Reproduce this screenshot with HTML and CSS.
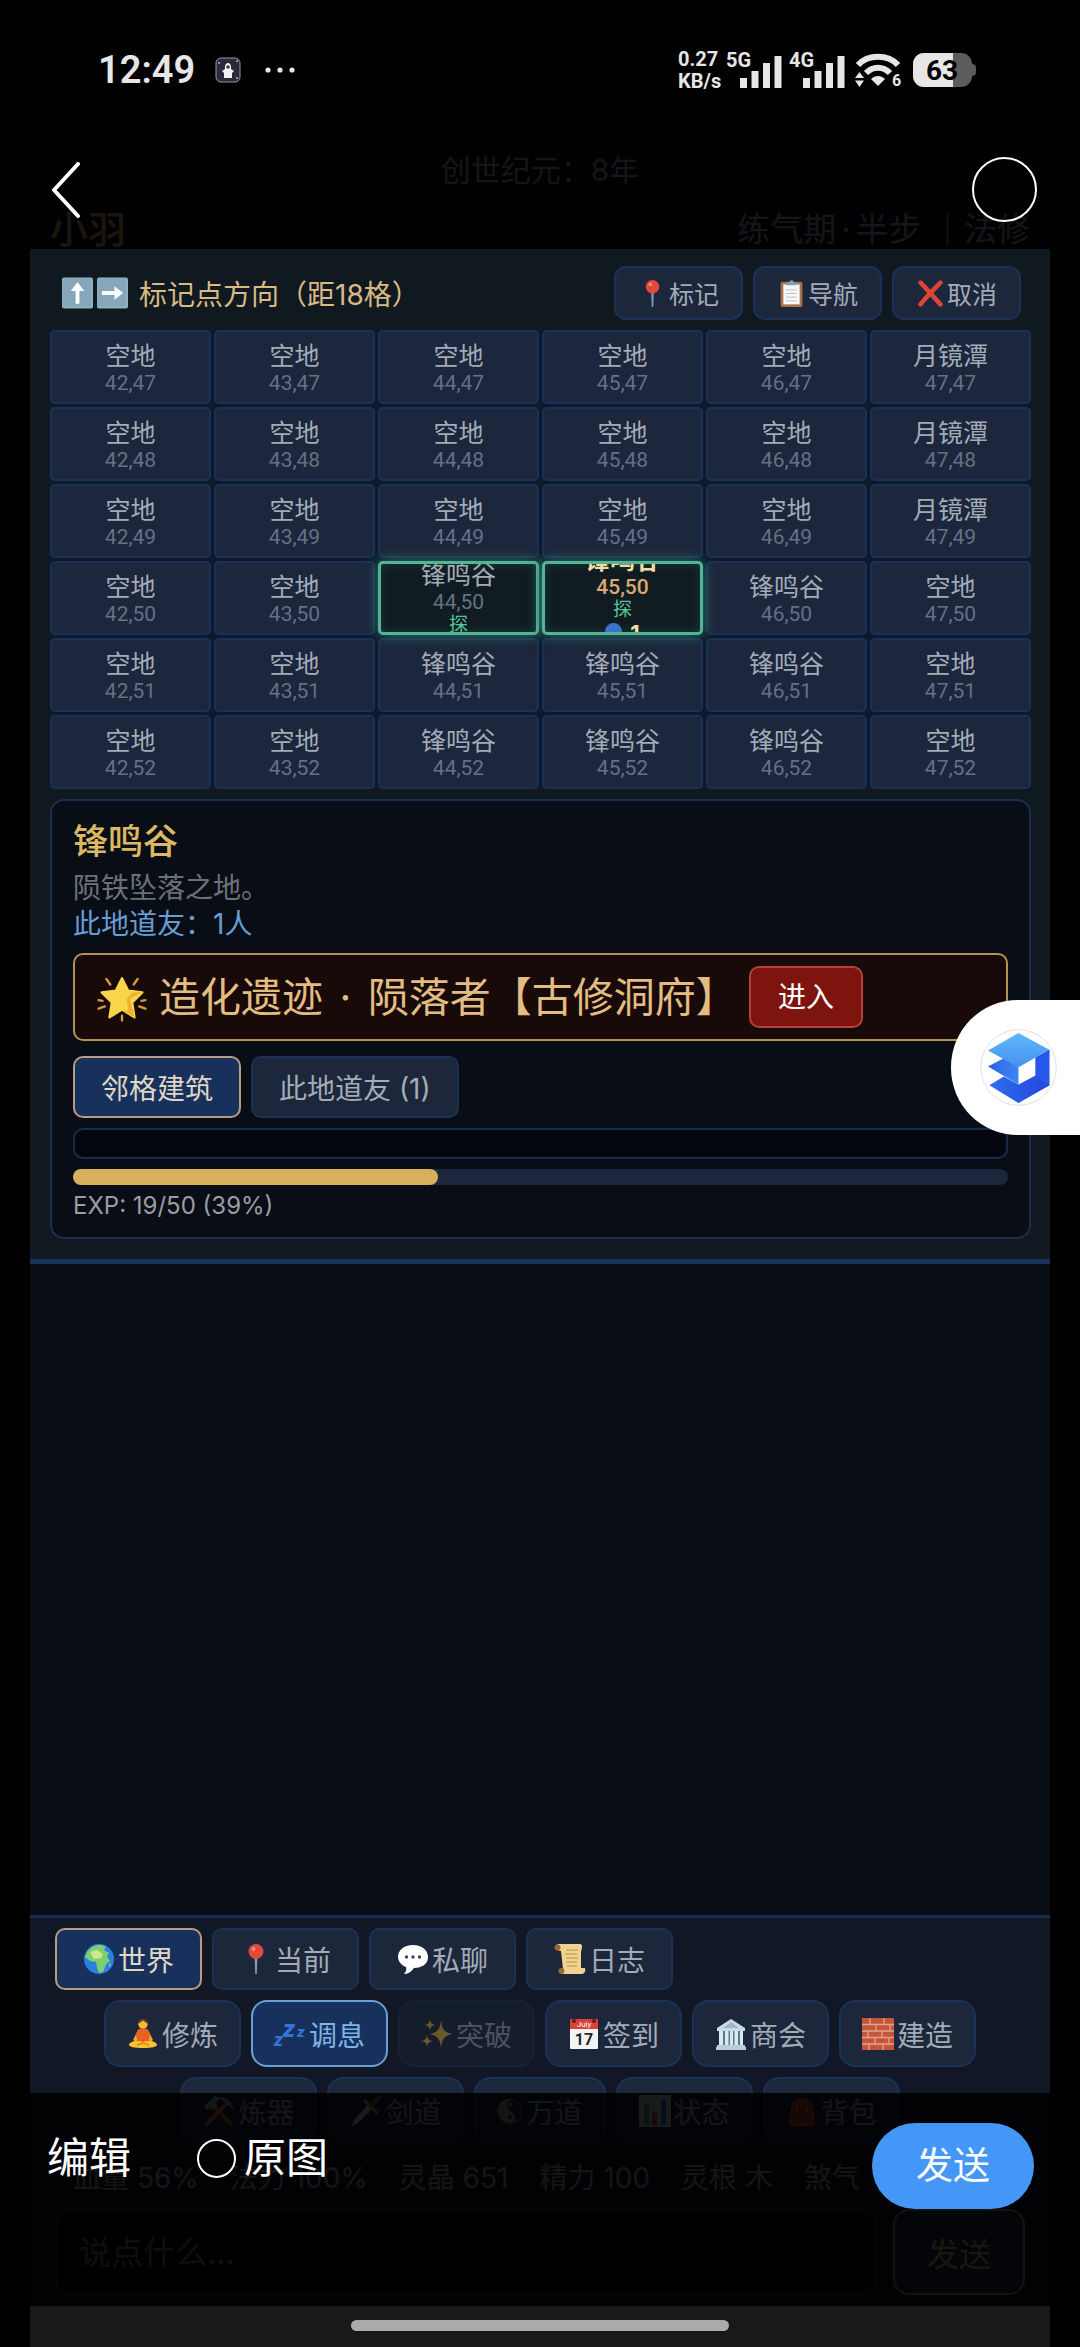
FILE: index.html
```html
<!DOCTYPE html>
<html lang="zh-CN">
<head>
<meta charset="utf-8">
<meta name="viewport" content="width=device-width, initial-scale=1">
<title>创世纪元</title>
<link rel="stylesheet" href="styles.css">
</head>
<body>
<svg class="sprite" aria-hidden="true">
  <defs>
    <linearGradient id="g-top" x1="0" y1="0" x2="0" y2="1"><stop offset="0" stop-color="#5fb8fa"/><stop offset="1" stop-color="#4591ee"/></linearGradient>
    <linearGradient id="g-mid" x1="0" y1="0" x2="1" y2="0"><stop offset="0" stop-color="#2a62ea"/><stop offset="1" stop-color="#3f87f2"/></linearGradient>
    <linearGradient id="g-low" x1="0" y1="0" x2="1" y2="0"><stop offset="0" stop-color="#2b6df0"/><stop offset="1" stop-color="#2546d8"/></linearGradient>
  </defs>
  <symbol id="i-up" viewBox="0 0 32 32"><rect width="32" height="32" rx="2" fill="#8fb0c2"/><rect x="1" y="1" width="29" height="29" rx="2" fill="#86a7ba"/><path d="M16 5l7 9h-5v13h-4V14H9z" fill="#fff"/></symbol>
  <symbol id="i-right" viewBox="0 0 32 32"><rect width="32" height="32" rx="2" fill="#8fb0c2"/><rect x="1" y="1" width="29" height="29" rx="2" fill="#86a7ba"/><path d="M27 16l-9 7v-5H5v-4h13V9z" fill="#fff"/></symbol>
  <symbol id="i-pin" viewBox="0 0 32 32"><path d="M14.600 14h2.800l-.6 17h-1.600z" fill="#7da0b5"/><circle cx="16" cy="8.500" r="7.500" fill="#e2483d"/><circle cx="13.500" cy="6" r="2" fill="#f58a78"/></symbol>
  <symbol id="i-clip" viewBox="0 0 32 32"><rect x="4" y="3" width="24" height="28" rx="2" fill="#a9714b"/><rect x="7" y="6" width="18" height="22" fill="#f5f7f8"/><path d="M10 12h12M10 16h12M10 20h12M10 24h12" stroke="#b5c0c6" stroke-width="1"/><path d="M10 7V4h3.500a2.500 2.500 0 015 0H22v3z" fill="#7ba5bd"/></symbol>
  <symbol id="i-cross" viewBox="0 0 32 32"><path d="M5 4c7 7 13 14 22 24M27 4C18 13 11 20 5 28" stroke="#dd4538" stroke-width="5" stroke-linecap="round" fill="none"/></symbol>
  <symbol id="i-star" viewBox="0 0 32 32"><path d="M16 4l4 8 9 1-6.500 6.500L24 29l-8-5-8 5 1.500-9.500L3 13l9-1z" fill="#f9d649" stroke="#f9d649" stroke-width="1.500" stroke-linejoin="round"/><path d="M29 13l-8 4 3 12-8-5 4 1-1-8 4-4z" fill="#eeb233"/><path d="M6 4.500L8.500 8M26 4.500L23.500 8M1 23.500l4-1.500M31 23.500L27 22M1 18l2.500.5M31 18l-2.500.5M16 28v3" stroke="#d99a35" stroke-width="1.500" stroke-linecap="round"/></symbol>
  <symbol id="i-globe" viewBox="0 0 32 32"><circle cx="16" cy="16" r="15" fill="#2b7fe0"/><path d="M4 9c5-7 13-9 19-5l-2 3 5 3-2 3 3 5-4 3-3 8-4 1-2-5-1-6-6-1-5-4z" fill="#7fcf72"/><path d="M7 9l7-2 6 4-2 4-7 1z" fill="#cfe98a"/><path d="M26 20l2 1-2 4z" fill="#7fcf72"/></symbol>
  <symbol id="i-chat" viewBox="0 0 32 32"><path d="M16 2c9 0 15 5 15 12S25 25 17 25c-3 4-6 6-10 6 2-2 3-5 2-7C4 22 1 18 1 14 1 7 7 2 16 2z" fill="#fff"/><circle cx="9.500" cy="14" r="1.700" fill="#3c4650"/><circle cx="16" cy="14" r="1.700" fill="#3c4650"/><circle cx="22.500" cy="14" r="1.700" fill="#3c4650"/></symbol>
  <symbol id="i-scroll" viewBox="0 0 32 32"><path d="M4 1h22c3 0 2 5 1 8v16h4c1 4-1 6-4 6H9c-3 0-4-3-2-5h2L7 8C2 8 0 3 4 1z" fill="#f0d391"/><path d="M12 7h12M11 11h12M12 15h12M12 19h11M13 23h10" stroke="#cfa55d" stroke-width="1.300"/><circle cx="3.500" cy="4.500" r="3" fill="#9b673e"/><circle cx="7.500" cy="28" r="3" fill="#9b673e"/></symbol>
  <symbol id="i-lotus" viewBox="0 0 32 32"><circle cx="16" cy="6" r="4.800" fill="#f8bd2e"/><path d="M10.800 6a5.200 5.200 0 0110.400 0L16 2.500z" fill="#5d3b22"/><path d="M11 12c2-2 8-2 10 0l5 10-3 2-3-5v6h-8v-6l-3 5-3-2z" fill="#f8a52b"/><path d="M11 12c2-2 8-2 10 0l2 5-2 8H11l-2-8z" fill="#e9611e"/><path d="M2 26c4-4 9-4 14-2 5-2 10-2 14 2 1 3-6 4-14 4S1 29 2 26z" fill="#f9c02f"/><path d="M10 27l6-2 6 2" stroke="#d98c1c" stroke-width="1.500" fill="none"/></symbol>
  <symbol id="i-spark" viewBox="0 0 32 32"><path d="M20 2c1 9 3 12 11 14-8 2-10 5-11 14-1-9-3-12-11-14 8-2 10-5 11-14zM9 1c.5 4 1.500 5 5 6-3.500 1-4.500 2-5 6-.5-4-1.500-5-5-6 3.500-1 4.500-2 5-6zM6 17c.6 4 2 5.500 6 6-4 .6-5.400 2-6 6-.6-4-2-5.400-6-6 4-.5 5.400-2 6-6z" fill="#f0b92f"/></symbol>
  <symbol id="i-museum" viewBox="0 0 32 32"><path d="M16 1l14 9v3H2v-3z" fill="#c9dce6"/><path d="M16 4l8 6H8z" fill="#9fb8c6"/><path d="M4 13h24v14H4z" fill="#5f7887"/><path d="M4 13h4v14H4zM10 13h3.500v14H10zM15 13h3v14h-3zM19.500 13h3.500v14h-3.500zM25 13h3v14h-3z" fill="#d9e8ef"/><path d="M2 27h28v2h1v3H1v-3h1z" fill="#b8cfdb"/></symbol>
  <symbol id="i-brick" viewBox="0 0 32 32"><rect width="32" height="32" fill="#c4573b"/><path d="M0 6.500h32M0 13h32M0 19.500h32M0 26h32M8 0v6.500M22 0v6.500M14 6.500V13M28 6.500V13M6 13v6.500M20 13v6.500M13 19.500V26M27 19.500V26M7 26v6M21 26v6" stroke="#e3a38b" stroke-width="1.300"/></symbol>
  <symbol id="i-tools" viewBox="0 0 32 32"><path d="M9 9l19 20" stroke="#a9672f" stroke-width="4" stroke-linecap="round"/><path d="M24 8L4 29" stroke="#c97a35" stroke-width="4" stroke-linecap="round"/><path d="M1 11L12 1l6 2-5 5 1 4-4 3-4-2-2 2z" fill="#a5b8c2"/><path d="M15 2c8-1 14 5 16 13l-9-8z" fill="#a5b8c2"/></symbol>
  <symbol id="i-dagger" viewBox="0 0 32 32"><path d="M2 31l2-6L19 9l4 4L8 28z" fill="#c2d0d8"/><path d="M15 6l12 12" stroke="#c89032" stroke-width="3.500" stroke-linecap="round"/><path d="M22 10l7-7" stroke="#8b5a34" stroke-width="4" stroke-linecap="round"/></symbol>
  <symbol id="i-yin" viewBox="0 0 32 32"><circle cx="16" cy="16" r="15" fill="#25282b" stroke="#a2a7aa" stroke-width="1"/><path d="M16 1a15 15 0 000 30c4 0 7-4 6-8s-4-6-6-7-4-4-3-8 3-7 3-7z" fill="#a2a7aa"/><circle cx="17" cy="8" r="2.400" fill="#a2a7aa"/><circle cx="16" cy="23" r="2.400" fill="#25282b"/></symbol>
  <symbol id="i-chart" viewBox="0 0 32 32"><rect width="32" height="32" rx="1" fill="#c9d3d9"/><rect x="5" y="10" width="5" height="20" fill="#4ca652"/><rect x="13" y="17" width="5" height="13" fill="#d9433b"/><rect x="22" y="4" width="5" height="26" fill="#2f7fd0"/></symbol>
  <symbol id="i-bag" viewBox="0 0 32 32"><path d="M12 5a4 4 0 018 0" stroke="#8d2c1f" stroke-width="3" fill="none"/><path d="M5 12C6 6 10 3 16 3s10 3 11 9l2 16c0 2-1 3-3 3H6c-2 0-3-1-3-3z" fill="#d14a2f"/><path d="M7 17h18v11H7z" fill="#b83f29"/><path d="M6 13h20M7 18h18" stroke="#8d2c1f" stroke-width="1.500"/><path d="M11 12v5M21 12v5" stroke="#e7a13d" stroke-width="2"/></symbol>
</svg>

<header class="status">
  <div class="status-side">
    <time class="clock">12:49</time>
    <svg class="notice" viewBox="0 0 26 26" aria-hidden="true"><rect x="1" y="1" width="24" height="24" rx="5" fill="#2a2a3c" stroke="#9b93a4"/><path d="M7 14l3-2c-1-8 7-8 6 0l3 2-2 2v5H9v-5z" fill="#f3f0f4"/><circle cx="13" cy="10" r="1.800" fill="#3a3444"/><circle cx="4" cy="6" r="1" fill="#d8a9a0"/><circle cx="22" cy="21" r="1" fill="#d8a9a0"/><circle cx="22" cy="4" r="1" fill="#d8a9a0"/></svg>
    <svg class="dots" viewBox="0 0 30 6" aria-hidden="true"><g fill="#e6e6e6"><circle cx="3" cy="3" r="2.600"/><circle cx="15" cy="3" r="2.600"/><circle cx="27" cy="3" r="2.600"/></g></svg>
  </div>
  <div class="status-side status-right">
    <div class="speed"><span>0.27</span><span>KB/s</span></div>
    <svg class="signal" viewBox="0 0 56 38" aria-hidden="true"><text x="0" y="16">5G</text><path d="M14 27h7v10h-7zM25.500 20h7v17h-7zM37 12h7v25h-7zM48.500 5h7v32h-7z"/></svg>
    <svg class="signal signal-second" viewBox="0 0 56 38" aria-hidden="true"><text x="0" y="16">4G</text><path d="M14 27h7v10h-7zM25.500 20h7v17h-7zM37 12h7v25h-7zM48.500 5h7v32h-7z"/></svg>
    <svg class="wifi" viewBox="0 0 48 36" aria-hidden="true"><path d="M3 13C13 2 33 2 43 13" fill="none" stroke="#e6e6e6" stroke-width="6"/><path d="M11 21c7-7 17-7 24 0" fill="none" stroke="#e6e6e6" stroke-width="6"/><path d="M16 27c4-4 10-4 14 0l-7 7z"/><path d="M0 26l4.500-6L9 26zM0 28.500h9L4.500 35z"/><text x="37" y="34">6</text></svg>
    <svg class="battery" viewBox="0 0 64 34" aria-label="电量 63%"><rect x="54" y="11" width="9" height="12" rx="4" fill="#5c5c5c"/><rect width="59" height="34" rx="11" fill="#5c5c5c"/><path d="M11 0h29v34H11A11 11 0 010 23V11A11 11 0 0111 0z"/><text x="29" y="27" text-anchor="middle">63</text></svg>
  </div>
</header>

<main class="app">
  <header class="hero">
    <p class="year">创世纪元：8年</p>
    <div class="identity"><strong>小羽</strong><span>练气期<span class="sep">·</span>半步 ｜法修</span></div>
  </header>

  <section class="map">
    <div class="map-head">
      <svg class="arrow" aria-hidden="true"><use href="#i-up"/></svg>
      <svg class="arrow" aria-hidden="true"><use href="#i-right"/></svg>
      <h2>标记点方向（距18格）</h2>
      <div class="map-actions">
        <button type="button"><svg aria-hidden="true"><use href="#i-pin"/></svg>标记</button>
        <button type="button"><svg aria-hidden="true"><use href="#i-clip"/></svg>导航</button>
        <button type="button"><svg aria-hidden="true"><use href="#i-cross"/></svg>取消</button>
      </div>
    </div>

    <div class="grid">
      <button class="cell"><b>空地</b><i>42,47</i></button>
      <button class="cell"><b>空地</b><i>43,47</i></button>
      <button class="cell"><b>空地</b><i>44,47</i></button>
      <button class="cell"><b>空地</b><i>45,47</i></button>
      <button class="cell"><b>空地</b><i>46,47</i></button>
      <button class="cell"><b>月镜潭</b><i>47,47</i></button>
      <button class="cell"><b>空地</b><i>42,48</i></button>
      <button class="cell"><b>空地</b><i>43,48</i></button>
      <button class="cell"><b>空地</b><i>44,48</i></button>
      <button class="cell"><b>空地</b><i>45,48</i></button>
      <button class="cell"><b>空地</b><i>46,48</i></button>
      <button class="cell"><b>月镜潭</b><i>47,48</i></button>
      <button class="cell"><b>空地</b><i>42,49</i></button>
      <button class="cell"><b>空地</b><i>43,49</i></button>
      <button class="cell"><b>空地</b><i>44,49</i></button>
      <button class="cell"><b>空地</b><i>45,49</i></button>
      <button class="cell"><b>空地</b><i>46,49</i></button>
      <button class="cell"><b>月镜潭</b><i>47,49</i></button>
      <button class="cell"><b>空地</b><i>42,50</i></button>
      <button class="cell"><b>空地</b><i>43,50</i></button>
      <button class="cell explore"><b>锋鸣谷</b><i>44,50</i><em>探</em></button>
      <button class="cell explore here"><b>锋鸣谷</b><i>45,50</i><em>探</em><span class="people"><span class="dot"></span>1</span></button>
      <button class="cell"><b>锋鸣谷</b><i>46,50</i></button>
      <button class="cell"><b>空地</b><i>47,50</i></button>
      <button class="cell"><b>空地</b><i>42,51</i></button>
      <button class="cell"><b>空地</b><i>43,51</i></button>
      <button class="cell"><b>锋鸣谷</b><i>44,51</i></button>
      <button class="cell"><b>锋鸣谷</b><i>45,51</i></button>
      <button class="cell"><b>锋鸣谷</b><i>46,51</i></button>
      <button class="cell"><b>空地</b><i>47,51</i></button>
      <button class="cell"><b>空地</b><i>42,52</i></button>
      <button class="cell"><b>空地</b><i>43,52</i></button>
      <button class="cell"><b>锋鸣谷</b><i>44,52</i></button>
      <button class="cell"><b>锋鸣谷</b><i>45,52</i></button>
      <button class="cell"><b>锋鸣谷</b><i>46,52</i></button>
      <button class="cell"><b>空地</b><i>47,52</i></button>
    </div>

    <section class="place">
      <h3>锋鸣谷</h3>
      <p class="desc">陨铁坠落之地。</p>
      <p class="friends">此地道友：1人</p>
      <div class="relic">
        <svg aria-hidden="true"><use href="#i-star"/></svg>
        <span>造化遗迹 <span class="sep">·</span> 陨落者【古修洞府】</span>
        <button type="button">进入</button>
      </div>
      <div class="tabs">
        <button class="tab active" type="button">邻格建筑</button>
        <button class="tab" type="button">此地道友 (1)</button>
      </div>
      <div class="empty-list"></div>
      <div class="exp-bar"><div class="exp-fill" style="width: 39%"></div></div>
      <p class="exp">EXP: 19/50 (39%)</p>
    </section>
  </section>

  <div class="log"></div>

  <section class="dock">
    <div class="tabs channels">
      <button class="tab active" type="button"><svg aria-hidden="true"><use href="#i-globe"/></svg>世界</button>
      <button class="tab" type="button"><svg aria-hidden="true"><use href="#i-pin"/></svg>当前</button>
      <button class="tab" type="button"><svg aria-hidden="true"><use href="#i-chat"/></svg>私聊</button>
      <button class="tab" type="button"><svg aria-hidden="true"><use href="#i-scroll"/></svg>日志</button>
    </div>
    <div class="actions">
      <button type="button"><svg aria-hidden="true"><use href="#i-lotus"/></svg>修炼</button>
      <button class="resting" type="button"><svg class="zzz" viewBox="0 0 32 32" aria-hidden="true"><text x="0" y="28" font-size="18">z</text><text x="9" y="19" font-size="24">z</text><text x="23" y="19" font-size="15">z</text></svg>调息</button>
      <button type="button" disabled><svg aria-hidden="true"><use href="#i-spark"/></svg>突破</button>
      <button type="button"><svg class="calendar" viewBox="0 0 32 32" aria-hidden="true"><rect x="2" y="1" width="28" height="30" rx="1" fill="#f3f4f5"/><path d="M2 1h28v10H2z" fill="#d8403a"/><circle cx="6" cy="3" r="2" fill="#6f1d1b"/><circle cx="26" cy="3" r="2" fill="#6f1d1b"/><text x="16" y="9" font-size="8" fill="#fff">July</text><text x="16" y="27" font-size="16" font-weight="700" fill="#23272b">17</text></svg>签到</button>
      <button type="button"><svg aria-hidden="true"><use href="#i-museum"/></svg>商会</button>
      <button type="button"><svg aria-hidden="true"><use href="#i-brick"/></svg>建造</button>
    </div>
    <div class="actions">
      <button type="button"><svg aria-hidden="true"><use href="#i-tools"/></svg>炼器</button>
      <button type="button"><svg aria-hidden="true"><use href="#i-dagger"/></svg>剑道</button>
      <button type="button"><svg class="narrow" aria-hidden="true"><use href="#i-yin"/></svg>万道</button>
      <button type="button"><svg aria-hidden="true"><use href="#i-chart"/></svg>状态</button>
      <button type="button"><svg aria-hidden="true"><use href="#i-bag"/></svg>背包</button>
    </div>
    <div class="stats"><span>血量 56%</span><span>法力 100%</span><span>灵晶 651</span><span>精力 100</span><span>灵根 木</span><span>煞气</span></div>
    <form class="say">
      <input type="text" placeholder="说点什么..." aria-label="说点什么">
      <button type="button">发送</button>
    </form>
  </section>

  <div class="viewer-top">
    <button type="button" aria-label="返回"><svg class="back" viewBox="0 0 30 56"><path d="M27 2L3 28l24 26" fill="none" stroke="#fff" stroke-width="4" stroke-linecap="round" stroke-linejoin="round"/></svg></button>
    <input class="pick" type="checkbox" aria-label="选择">
  </div>
  <div class="viewer-bottom">
    <button class="edit" type="button">编辑</button>
    <label class="original"><input type="checkbox">原图</label>
    <button class="send" type="button">发送</button>
  </div>
</main>

<div class="nav"><span class="handle"></span></div>

<button class="assistant" type="button" aria-label="助手">
  <svg viewBox="1259 746 230 230"><circle cx="1374" cy="861" r="113" fill="#fff" stroke="#c9d2dc" stroke-width="2"/><path d="M1330 888l-43 26 87 53 92-52V808l-41 27v50l-51 27z" fill="url(#g-low)"/><path d="M1425 830l41-22v107l-41-30z" fill="#2558ea"/><path d="M1330 833l44 27v52l-91-54z" fill="url(#g-mid)"/><path d="M1374 758l92 50-92 52-91-50z" fill="url(#g-top)"/></svg>
</button>
</body>
</html>
```

FILE: styles.css
```css
* { box-sizing: border-box; }

body {
  position: relative;
  display: flex;
  flex-direction: column;
  min-height: 100vh;
  margin: 0;
  background: #000;
  color: #a3abb7;
  font-family: Inter, "Noto Sans CJK SC", sans-serif;
  font-size: 28px;
}

h2, h3, p { margin: 0; font-weight: 400; }

button, input { margin: 0; font: inherit; color: inherit; }

button {
  display: flex;
  align-items: center;
  justify-content: center;
  padding: 0;
  border: 0;
  background: none;
  white-space: nowrap;
}

svg { display: block; flex: none; }

.sprite { position: absolute; width: 0; height: 0; }

/* System status bar */
.status {
  display: flex;
  justify-content: space-between;
  align-items: center;
  height: 130px;
  padding: 10px 103px 0 98px;
  color: #e6e6e6;
  font-family: Roboto, sans-serif;
  font-weight: 700;
}
.status-side { display: flex; align-items: center; }
.status svg { overflow: visible; fill: #e6e6e6; }
.clock { font-size: 38px; font-weight: 600; }
.notice { width: 26px; height: 26px; margin-left: 20px; }
.dots { width: 30px; height: 6px; margin-left: 24px; }
.speed { display: flex; flex-direction: column; width: 48px; font-size: 20px; line-height: 22px; }
.signal { width: 56px; height: 38px; font-size: 20px; }
.signal-second { margin-left: 7px; }
.wifi { width: 48px; height: 36px; margin-left: 10px; font-size: 16px; }
.battery { width: 64px; height: 34px; margin-left: 10px; font-size: 28px; }
.status .battery text { fill: #000; }

/* Game screen */
.app {
  position: relative;
  display: flex;
  flex: 1;
  flex-direction: column;
  margin: 0 30px;
  background: #090d16;
}

.sep { margin: 0 5px; }

.hero { padding: 15px 20px 0; background: #0b0f18; }
.year { font-size: 30px; line-height: 50px; text-align: center; }
.identity {
  display: flex;
  justify-content: space-between;
  margin-top: 14px;
  font-size: 33px;
  line-height: 40px;
}
.identity strong { color: #dcb35c; font-size: 38px; font-weight: 500; }

.map {
  display: flex;
  flex-direction: column;
  gap: 10px;
  padding: 17px 19px 20px 20px;
  border-bottom: 5px solid #1a315c;
  background: #111920;
}

.map-head { display: flex; align-items: center; gap: 4px; padding: 0 10px 0 12px; }
.arrow { width: 31px; height: 32px; }
.map-head h2 { margin-left: 7px; color: #d9b984; font-size: 28px; white-space: nowrap; }
.map-actions { display: flex; gap: 10px; margin-left: auto; }
.map-actions button {
  gap: 2px;
  height: 54px;
  padding: 0 22px;
  border: 2px solid #1b3157;
  border-radius: 12px;
  background: #1c273c;
  font-size: 25px;
}
.map-actions svg { width: 29px; height: 29px; }

.grid {
  display: grid;
  grid-template-columns: repeat(6, 1fr);
  grid-auto-rows: 74px;
  gap: 3px;
  background: #0c1a2c;
}
.cell {
  flex-direction: column;
  overflow: hidden;
  padding-top: 3px;
  border: 2px solid #1b3054;
  border-radius: 5px;
  background: #1c263c;
}
.cell b { font-size: 25px; font-weight: 400; line-height: 29px; }
.cell i { color: #667085; font-family: Roboto, sans-serif; font-size: 21px; font-style: normal; line-height: 24px; }
.cell em { color: #55c596; font-size: 19px; font-style: normal; line-height: 22px; }
.explore {
  z-index: 1;
  padding-top: 0;
  border: 3px solid #56b394;
  background: #101c22;
  box-shadow: 0 0 14px #2f7f6c, inset 0 0 10px #173f3a;
}
.here b { color: #f0dba8; font-weight: 700; }
.here i { color: #dda871; font-weight: 500; }
.people {
  display: flex;
  flex: none;
  align-items: flex-start;
  gap: 8px;
  height: 30px;
  color: #f0dba8;
  font-size: 22px;
  font-weight: 700;
  line-height: 24px;
}
.dot { width: 17px; height: 17px; margin-top: 2px; border-radius: 50%; background: #3b74cf; }

.place {
  padding: 15px 21px 13px;
  border: 2px solid #1a2f50;
  border-radius: 14px;
  background: #090d16;
}
.place h3 { margin-bottom: 4px; color: #dcb863; font-size: 35px; font-weight: 500; line-height: 50px; }
.place p { line-height: 36px; }
.place .desc { color: #6c7176; }
.place .friends { color: #679dd3; }

.relic {
  display: flex;
  align-items: center;
  margin-top: 11px;
  padding: 11px 22px;
  border: 2px solid #b3934f;
  border-radius: 10px;
  background: #170a09;
  color: #e3bc82;
  font-size: 41px;
  line-height: 62px;
  white-space: nowrap;
}
.relic svg { width: 50px; height: 50px; margin-right: 12px; }
.relic button {
  height: 62px;
  margin-left: 12px;
  padding: 0 27px;
  border: 2px solid #b3433d;
  border-radius: 10px;
  background: #7d150e;
  color: #fff;
  font-size: 28px;
}

.tabs { display: flex; gap: 10px; }
.place .tabs { margin-top: 15px; }
.tab {
  height: 62px;
  padding: 0 26px;
  border: 2px solid #1b3156;
  border-radius: 10px;
  background: #1c273b;
}
.tab.active { border-color: #b99d82; background: #18315c; color: #dfd7c4; }

.empty-list { height: 31px; margin-top: 10px; border: 2px solid #182c4b; border-radius: 10px; background: #04070f; }
.exp-bar { height: 16px; margin-top: 10px; border-radius: 8px; background: #1c263c; }
.exp-fill { height: 16px; border-radius: 8px; background: #d8b05b; }
.place .exp { margin-top: 3px; color: #9a9da3; font-size: 24px; }

.log { flex: 1; }

/* Chat channels, actions and input */
.dock {
  display: flex;
  flex-direction: column;
  gap: 10px;
  padding: 10px 25px 11px;
  border-top: 3px solid #1b2e4e;
  background: #111724;
}
.channels svg, .actions svg { width: 32px; height: 32px; margin-right: 3px; }
.actions .narrow { width: 26px; }
.zzz { overflow: visible; fill: #3573d9; font-family: Roboto, sans-serif; font-style: italic; font-weight: 900; }
.calendar { font-family: Roboto, sans-serif; text-anchor: middle; }
.actions { display: flex; justify-content: center; gap: 10px; }
.actions button {
  height: 67px;
  padding: 0 21px;
  border: 2px solid #1b3258;
  border-radius: 16px;
  background: #1c273b;
}
.actions .resting { border-color: #6b9fd3; background: #18315c; color: #7fb2e6; }
.actions button:disabled { opacity: .4; }

.stats { display: flex; gap: 31px; margin-top: 4px; padding-left: 18px; line-height: 41px; white-space: nowrap; }
.say { display: flex; gap: 16px; font-size: 32px; }
.say input {
  flex: 1;
  min-width: 0;
  height: 86px;
  padding: 0 22px;
  border: 2px solid #1b3156;
  border-radius: 16px;
  background: #04070e;
}
.say input::placeholder { color: #757575; opacity: 1; }
.say button {
  width: 132px;
  border: 2px solid #b3934f;
  border-radius: 16px;
  background: #1a2a45;
  color: #cfb27c;
}

/* Picture viewer chrome, laid over the game screen */
.viewer-top, .viewer-bottom { position: absolute; right: 0; left: 0; display: flex; background: rgba(0, 0, 0, .88); color: #fff; }
.viewer-top { top: 0; align-items: center; justify-content: space-between; height: 119px; padding: 0 13px 0 21px; }
.back { width: 30px; height: 56px; }
.viewer-top input, .viewer-bottom input { appearance: none; border: 2px solid #fff; border-radius: 50%; }
.pick { width: 65px; height: 65px; }
.viewer-bottom { bottom: 0; align-items: flex-start; height: 213px; padding: 30px 16px 0 17px; font-size: 42px; line-height: 70px; }
.original { display: flex; align-items: center; gap: 8px; margin-left: 66px; }
.original input { width: 39px; height: 39px; }
.send { width: 162px; height: 86px; margin-left: auto; border-radius: 43px; background: #4497f7; font-size: 37px; }

.nav { display: flex; justify-content: center; height: 41px; margin: 0 30px; padding-top: 14px; background: #191919; }
.handle { width: 378px; height: 11px; border-radius: 6px; background: #aaa; }

.assistant {
  position: absolute;
  top: 1000px;
  right: 0;
  justify-content: flex-start;
  width: 129px;
  height: 135px;
  padding-left: 29px;
  border-radius: 67px 0 0 67px;
  background: #fff;
}
.assistant svg { width: 77px; height: 77px; }
```
